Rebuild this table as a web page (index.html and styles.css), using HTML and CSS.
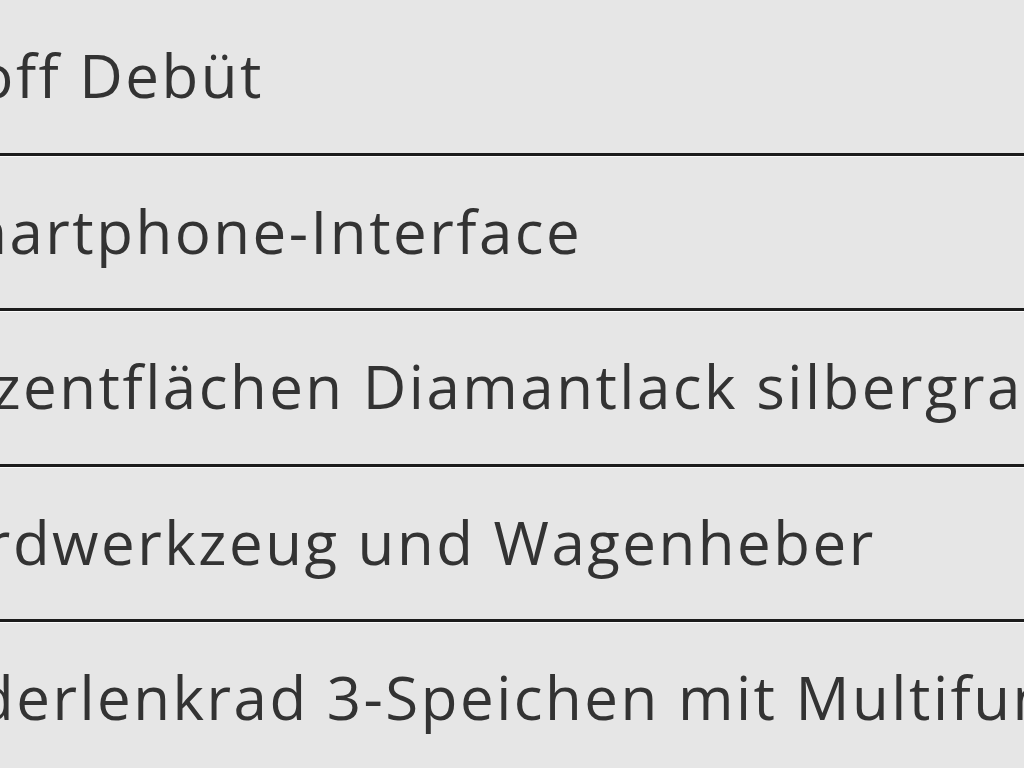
FILE: index.html
```html
<!DOCTYPE html>
<html lang="de">
<head>
<meta charset="utf-8">
<title>Ausstattung</title>
<link rel="stylesheet" href="styles.css">
</head>
<body>
<ul class="list">
  <li class="row"><span class="label r1">Stoff Debüt</span></li>
  <li class="row"><span class="label r2">Smartphone-Interface</span></li>
  <li class="row"><span class="label r3">Akzentflächen Diamantlack silbergrau</span></li>
  <li class="row"><span class="label r4">Bordwerkzeug und Wagenheber</span></li>
  <li class="row"><span class="label r5">Lederlenkrad 3-Speichen mit Multifunktion</span></li>
</ul>
</body>
</html>
```

FILE: styles.css
```css
html, body {
  margin: 0;
  padding: 0;
  background: #e6e6e6;
  overflow: hidden;
}
.list {
  list-style: none;
  margin: 0;
  padding: 0;
  width: 1024px;
  height: 768px;
  overflow: hidden;
}
.row {
  box-sizing: border-box;
  height: 155.5px;
  border-bottom: 3px solid #1c1c1c;
  box-shadow: 0 1px 0 #fbfbfb;
  font-family: "Open Sans", "Noto Sans", sans-serif;
  font-size: 60px;
  letter-spacing: 2.5px;
  line-height: 150px;
  color: #333;
  white-space: nowrap;
  overflow: hidden;
}
.label { display: block; }
.r1 { margin-left: -82px; }
.r2 { margin-left: -84px; }
.r3 { margin-left: -82px; }
.r4 { margin-left: -94px; }
.r5 { margin-left: -93px; }
```
